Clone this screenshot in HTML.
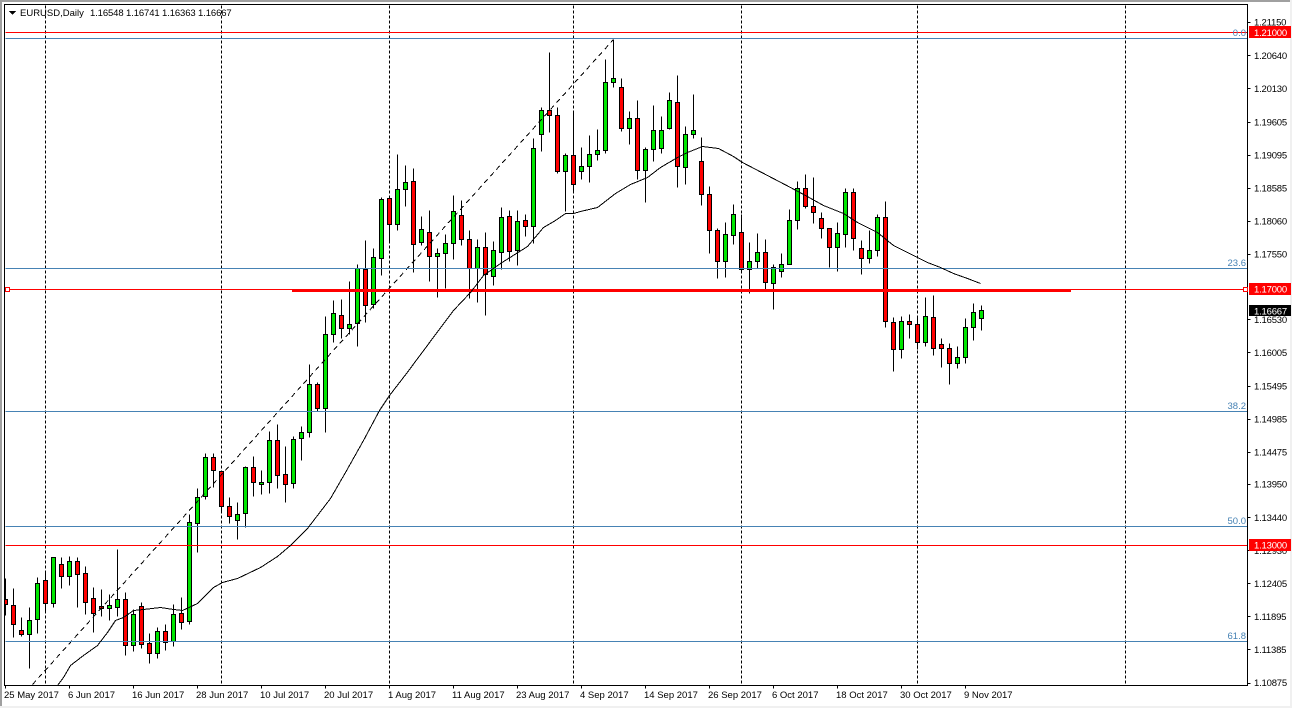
<!DOCTYPE html>
<html><head><meta charset="utf-8"><title>EURUSD,Daily</title>
<style>
html,body{margin:0;padding:0;background:#fff;width:1292px;height:708px;overflow:hidden}
svg{display:block}
text{font-family:"Liberation Sans",sans-serif;font-size:9.5px;fill:#000}
.f{fill:#4682b4;text-anchor:end}
.w{fill:#fff}
.p text,text.w{letter-spacing:-.2px}
</style></head><body>
<svg width="1292" height="708" viewBox="0 0 1292 708" xmlns="http://www.w3.org/2000/svg">
<defs><clipPath id="c"><rect x="5" y="5" width="1242" height="680"/></clipPath></defs>
<rect width="1292" height="708" fill="#fff"/>
<rect x="0" y="0" width="1292" height="2" fill="#a0a0a0"/>
<rect x="0" y="0" width="2" height="708" fill="#a0a0a0"/>
<rect x="0" y="706" width="1292" height="2" fill="#f0f0f0"/>
<rect x="1290" y="0" width="2" height="708" fill="#f0f0f0"/>
<g shape-rendering="crispEdges" clip-path="url(#c)">
<g transform="translate(.5 .5)" stroke="#000" fill="none" stroke-dasharray="3 2">
<path d="M45 5V685M221 5V685M389 5V685M573 5V685M741 5V685M917 5V685M1125 5V685"/>
</g>
<g transform="translate(.5 .5)" stroke="#000" fill="none">
<path d="M5 578V615M13 588V637M21 617V636M29 607V668M37 577V633M45 573V613M53 557V607M61 557V588M69 556V585M77 557V607M85 566V614M93 587V632M101 589V616M109 594V620M117 549V616M125 592V655M133 609V651M141 602V648M149 633V663M157 627V658M165 624V650M173 604V646M181 597V629M189 514V624M197 488V552M205 453V499M213 453V487M221 471V512M229 497V523M237 502V539M245 466V527M253 456V496M261 470V494M269 431V493M277 424V488M285 446V502M293 436V488M301 426V460M309 364V437M317 382V411M325 316V432M333 300V342M341 299V338M349 281V334M357 264V346M365 240V322M373 248V308M381 197V275M389 196V240M397 154V230M405 165V206M413 168V272M421 216V245M429 210V281M437 248V297M445 234V288M453 195V259M461 200V245M469 230V298M477 239V302M485 232V315M493 241V285M501 207V269M509 210V261M517 210V265M525 214V236M533 138V243M541 107V151M549 52V132M557 107V173M565 153V211M573 110V193M581 147V179M589 135V182M597 129V160M605 59V153M613 39V87M621 78V131M629 111V144M637 100V179M645 147V202M653 105V161M661 116V153M669 92V129M677 75V187M685 126V184M693 94V138M701 137V205M709 186V253M717 228V278M725 222V277M733 204V244M741 214V270M749 242V293M757 233V268M765 239V291M773 264V309M781 253V277M789 209V264M797 181V229M805 174V208M813 177V223M821 212V238M829 228V267M837 222V271M845 188V247M853 188V250M861 240V274M869 230V263M877 214V256M885 201V327M893 317V371M901 316V358M909 314V338M917 316V349M925 297V346M933 295V355M941 338V367M949 343V384M957 346V368M965 318V363M973 303V340M981 305V330"/>
<path fill="#00e600" d="M27 620h4v14h-4zM35 583h4v36h-4zM51 557h4v46h-4zM67 561h4v15h-4zM107 605h4v3h-4zM115 599h4v8h-4zM131 614h4v31h-4zM155 631h4v22h-4zM171 614h4v27h-4zM187 522h4v99h-4zM195 497h4v26h-4zM203 457h4v39h-4zM235 514h4v6h-4zM243 467h4v46h-4zM259 482h4v2h-4zM267 440h4v42h-4zM291 439h4v44h-4zM299 432h4v6h-4zM307 384h4v48h-4zM323 334h4v74h-4zM331 313h4v21h-4zM347 324h4v4h-4zM355 268h4v55h-4zM371 257h4v47h-4zM379 199h4v59h-4zM395 189h4v35h-4zM403 182h4v7h-4zM419 229h4v13h-4zM435 253h4v3h-4zM443 243h4v10h-4zM451 211h4v32h-4zM475 247h4v21h-4zM491 250h4v26h-4zM499 217h4v35h-4zM515 221h4v29h-4zM531 148h4v78h-4zM539 110h4v24h-4zM563 155h4v16h-4zM579 166h4v5h-4zM587 154h4v12h-4zM595 150h4v4h-4zM603 82h4v68h-4zM611 78h4v4h-4zM627 118h4v10h-4zM643 149h4v21h-4zM651 130h4v19h-4zM659 130h4v18h-4zM667 100h4v28h-4zM683 134h4v33h-4zM691 130h4v4h-4zM723 234h4v27h-4zM731 214h4v21h-4zM747 261h4v8h-4zM755 252h4v9h-4zM771 267h4v16h-4zM779 264h4v7h-4zM787 220h4v44h-4zM795 188h4v32h-4zM835 233h4v14h-4zM843 192h4v42h-4zM867 250h4v8h-4zM875 217h4v33h-4zM899 321h4v28h-4zM923 316h4v26h-4zM955 357h4v6h-4zM963 327h4v30h-4zM971 312h4v15h-4zM979 310h4v8h-4z"/>
<path fill="#f00" d="M3 599h4v5h-4zM11 605h4v19h-4zM19 630h4v4h-4zM43 580h4v23h-4zM59 564h4v12h-4zM75 561h4v13h-4zM83 573h4v29h-4zM91 598h4v15h-4zM99 606h4v2h-4zM123 599h4v46h-4zM139 606h4v38h-4zM147 643h4v10h-4zM163 631h4v11h-4zM179 613h4v9h-4zM211 457h4v13h-4zM219 471h4v35h-4zM227 506h4v10h-4zM251 467h4v15h-4zM275 440h4v35h-4zM283 474h4v10h-4zM315 384h4v24h-4zM339 315h4v13h-4zM363 269h4v36h-4zM387 198h4v26h-4zM411 181h4v63h-4zM427 232h4v24h-4zM459 215h4v24h-4zM467 239h4v29h-4zM483 247h4v27h-4zM507 216h4v35h-4zM523 220h4v6h-4zM547 110h4v5h-4zM555 115h4v56h-4zM571 155h4v29h-4zM619 87h4v41h-4zM635 118h4v52h-4zM675 102h4v64h-4zM699 161h4v33h-4zM707 194h4v36h-4zM715 230h4v31h-4zM739 232h4v37h-4zM763 252h4v30h-4zM803 188h4v18h-4zM811 206h4v6h-4zM819 218h4v10h-4zM827 228h4v19h-4zM851 192h4v46h-4zM859 248h4v10h-4zM883 217h4v104h-4zM891 322h4v27h-4zM907 321h4v3h-4zM915 324h4v18h-4zM931 317h4v31h-4zM939 344h4v4h-4zM947 348h4v15h-4z"/>
</g>
<g transform="translate(.5 .5)" fill="none">
<path stroke="#000" stroke-dasharray="5 4" d="M32 684L613 39"/>
<path stroke="#4682b4" d="M5 38H1247M5 268H1247M5 411H1247M5 526H1247M5 641H1247"/>
<path stroke="#f00" d="M5 32H1247M5 289H1247M5 545H1247"/>
</g>
<rect x="292" y="289" width="779" height="3" fill="#f00"/>
<path transform="translate(.5 .5)" fill="none" stroke="#000" stroke-width="1" d="M57 685L63 677L70 665L83 655L97 645L107 632L115 620L123 617L133 610L143 609L160 607L173 609L182 610L197 603L213 587L222 582L237 578L260 567L277 556L290 545L307 528L330 498L345 472L363 440L379 410L389 395L406 373L438 330L453 310L470 292L483 275L500 263L527 246L543 227L555 220L565 213L573 213L580 211L597 207L615 193L630 184L647 177L660 167L677 157L687 152L702 146L718 148L733 156L742 162L767 175L790 187L805 195L823 205L843 213L857 222L877 232L893 245L917 257L927 262L940 267L953 273L967 278L980 283"/>
</g>
<g shape-rendering="crispEdges">
<g transform="translate(.5 .5)" fill="none" stroke="#000">
<path d="M4 4H1247V685H4Z"/>
<path d="M1247 22h3M1247 55h3M1247 88h3M1247 122h3M1247 155h3M1247 188h3M1247 221h3M1247 254h3M1247 319h3M1247 352h3M1247 386h3M1247 419h3M1247 452h3M1247 484h3M1247 517h3M1247 550h3M1247 583h3M1247 616h3M1247 649h3M1247 683h3"/>
<path d="M5 685v3M69 685v3M133 685v3M197 685v3M261 685v3M325 685v3M389 685v3M453 685v3M517 685v3M581 685v3M645 685v3M709 685v3M773 685v3M837 685v3M901 685v3M965 685v3"/>
</g>
<rect x="5" y="287" width="4" height="4" fill="#fff" stroke="#f00" stroke-width="1" transform="translate(.5 .5)"/>
<rect x="1243" y="287" width="4" height="4" fill="#fff" stroke="#f00" stroke-width="1" transform="translate(.5 .5)"/>
<path d="M9 11h7l-3.5 4z" fill="#000"/>
</g>
<text x="20" y="16">EURUSD,Daily</text>
<text x="90" y="16" letter-spacing="-.12">1.16548 1.16741 1.16363 1.16667</text>
<text class="f" x="1246" y="36">0.0</text>
<text class="f" x="1246" y="266">23.6</text>
<text class="f" x="1246" y="409">38.2</text>
<text class="f" x="1246" y="524">50.0</text>
<text class="f" x="1246" y="639">61.8</text>
<g class="p">
<text x="1254" y="25.5">1.21150</text>
<text x="1254" y="59">1.20640</text>
<text x="1254" y="92">1.20130</text>
<text x="1254" y="125.5">1.19605</text>
<text x="1254" y="158.5">1.19095</text>
<text x="1254" y="191.5">1.18585</text>
<text x="1254" y="224.5">1.18060</text>
<text x="1254" y="257.5">1.17550</text>
<text x="1254" y="323">1.16530</text>
<text x="1254" y="356">1.16005</text>
<text x="1254" y="389.5">1.15495</text>
<text x="1254" y="422.5">1.14985</text>
<text x="1254" y="455.5">1.14475</text>
<text x="1254" y="487.5">1.13950</text>
<text x="1254" y="521">1.13440</text>
<text x="1254" y="554">1.12930</text>
<text x="1254" y="587">1.12405</text>
<text x="1254" y="620">1.11895</text>
<text x="1254" y="653">1.11385</text>
<text x="1254" y="686">1.10875</text>
</g>
<rect x="1249" y="26" width="42" height="12" fill="#f00"/>
<text class="w" x="1254" y="36">1.21000</text>
<rect x="1249" y="283" width="42" height="12" fill="#f00"/>
<text class="w" x="1254" y="292.5">1.17000</text>
<rect x="1249" y="305" width="42" height="11" fill="#000"/>
<text class="w" x="1254" y="314.5">1.16667</text>
<rect x="1249" y="539" width="42" height="12" fill="#f00"/>
<text class="w" x="1254" y="548.5">1.13000</text>
<text x="4" y="698">25 May 2017</text>
<text x="68" y="698">6 Jun 2017</text>
<text x="132" y="698">16 Jun 2017</text>
<text x="196" y="698">28 Jun 2017</text>
<text x="260" y="698">10 Jul 2017</text>
<text x="324" y="698">20 Jul 2017</text>
<text x="388" y="698">1 Aug 2017</text>
<text x="452" y="698">11 Aug 2017</text>
<text x="516" y="698">23 Aug 2017</text>
<text x="580" y="698">4 Sep 2017</text>
<text x="644" y="698">14 Sep 2017</text>
<text x="708" y="698">26 Sep 2017</text>
<text x="772" y="698">6 Oct 2017</text>
<text x="836" y="698">18 Oct 2017</text>
<text x="900" y="698">30 Oct 2017</text>
<text x="964" y="698">9 Nov 2017</text>
</svg>
</body></html>
